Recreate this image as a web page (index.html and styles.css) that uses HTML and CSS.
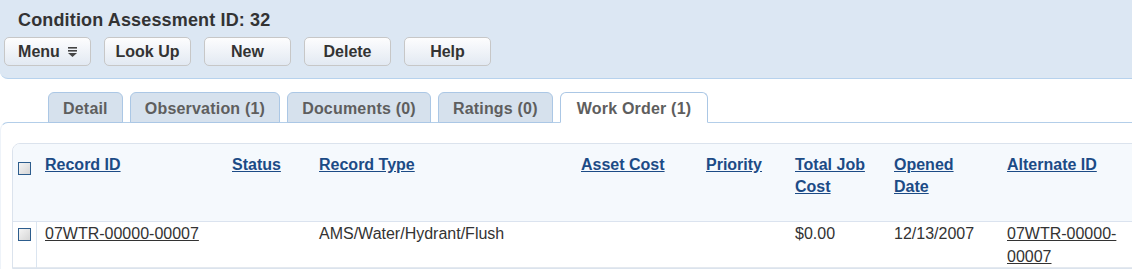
FILE: index.html
```html
<!DOCTYPE html>
<html lang="en">
<head>
  <meta charset="UTF-8" />
  <title>Condition Assessment ID: 32</title>
  <link rel="stylesheet" href="styles.css">
</head>
<body>

  <!-- Record header with actions -->
  <div class="record-header">
    <h1>Condition Assessment ID: 32</h1>
    <div class="actions">
      <button class="btn">Menu
        <svg class="menu-icon" width="9" height="10" viewBox="0 0 9 10">
          <rect x="0" y="0" width="9" height="1.6" fill="#444"/>
          <rect x="0" y="3" width="9" height="1.6" fill="#444"/>
          <polygon points="0,6 9,6 4.5,10" fill="#444"/>
        </svg>
      </button>
      <button class="btn">Look Up</button>
      <button class="btn">New</button>
      <button class="btn">Delete</button>
      <button class="btn">Help</button>
    </div>
  </div>

  <!-- Tabs -->
  <div class="tabs">
    <div class="tab">Detail</div>
    <div class="tab">Observation (1)</div>
    <div class="tab">Documents (0)</div>
    <div class="tab">Ratings (0)</div>
    <div class="tab active">Work Order (1)</div>
  </div>

  <div class="panel">
    <div class="grid">
      <div class="row head">
        <div class="cell check"><span class="checkbox"></span></div>
        <div class="cell"><a href="#">Record ID</a></div>
        <div class="cell"><a href="#">Status</a></div>
        <div class="cell"><a href="#">Record Type</a></div>
        <div class="cell"><a href="#">Asset Cost</a></div>
        <div class="cell"><a href="#">Priority</a></div>
        <div class="cell"><a href="#">Total Job Cost</a></div>
        <div class="cell"><a href="#">Opened Date</a></div>
        <div class="cell"><a href="#">Alternate ID</a></div>
        <div class="cell"></div>
      </div>
      <div class="row data">
        <div class="cell check"><span class="checkbox"></span></div>
        <div class="cell"><a href="#">07WTR-00000-00007</a></div>
        <div class="cell"></div>
        <div class="cell">AMS/Water/Hydrant/Flush</div>
        <div class="cell"></div>
        <div class="cell"></div>
        <div class="cell">$0.00</div>
        <div class="cell">12/13/2007</div>
        <div class="cell"><a href="#">07WTR-00000-00007</a></div>
        <div class="cell"></div>
      </div>
    </div>
  </div>

</body>
</html>
```

FILE: styles.css
```css
html, body {
  margin: 0;
  padding: 0;
  background: #fff;
  color: #333;
  font-family: 'Liberation Sans', Arial, sans-serif;
  overflow: hidden;
}

.record-header {
  background: #dce7f3;
  border-bottom: 1px solid #b7d2ed;
  border-bottom-left-radius: 8px;
  padding: 9px 0 12px 0;
}

.record-header h1 {
  margin: 0 0 0 18px;
  font-size: 18px;
  line-height: 22px;
  font-weight: bold;
  letter-spacing: 0.15px;
  color: #333;
}

.actions {
  display: flex;
  gap: 13px;
  margin-top: 6px;
  padding-left: 4px;
}

.btn {
  width: 87px;
  height: 29px;
  box-sizing: border-box;
  border: 1px solid #c7c7c7;
  border-radius: 5px;
  background: linear-gradient(#fdfdfe, #e2e9f2);
  font-family: 'Liberation Sans', Arial, sans-serif;
  font-size: 16px;
  font-weight: bold;
  color: #333;
  padding: 0;
  display: flex;
  align-items: center;
  justify-content: center;
  gap: 8px;
}

.menu-icon {
  margin-top: 1px;
}

.tabs {
  display: flex;
  gap: 7px;
  margin: 13px 0 -1px 48px;
  position: relative;
  z-index: 1;
}

.tab {
  height: 31px;
  box-sizing: border-box;
  padding: 2px 14px 0;
  line-height: 27px;
  font-size: 16px;
  font-weight: bold;
  letter-spacing: 0.2px;
  color: #5e5e5e;
  background: #d6e1ed;
  border: 1px solid #abc7e5;
  border-radius: 6px 6px 0 0;
}

.tab.ratings {
  padding: 2px 16px 0;
}

.tab.active {
  padding: 2px 16px 0;
  background: #fff;
  border-bottom-color: #fff;
}

.panel {
  border-top: 1px solid #b3cee9;
  border-left: 1px solid #eef3f9;
  border-top-left-radius: 8px;
  padding: 20px 0 0 11px;
}

.grid {
  width: 1240px;
  border: 1px solid #dbe3ed;
  border-top-left-radius: 8px;
  overflow: hidden;
}

.row {
  display: grid;
  grid-template-columns: 24px 187px 87px 262px 125px 89px 99px 113px 131px 120px;
  font-size: 16px;
}

.cell {
  padding: 0 8px;
}

.head {
  background: #f5f9fd;
  height: 78px;
  box-sizing: border-box;
  border-bottom: 1px solid #dbe3ef;
}

.head .cell {
  padding-top: 10px;
  line-height: 22px;
  font-weight: bold;
}

.head a {
  color: #1c4b86;
}

.data {
  height: 46px;
  box-sizing: border-box;
  border-bottom: 1px solid #e4e9ef;
  line-height: 23px;
}

.data a {
  color: #333;
}

.row .cell.check {
  padding: 0 0 0 5px;
}

.data .cell.check {
  border-right: 1px solid #dbe5f0;
}

.checkbox {
  display: block;
  width: 13px;
  height: 13px;
  box-sizing: border-box;
  border: 1px solid #2d5d8d;
  background: linear-gradient(135deg, #f4f4f4, #d6d6d6);
}

.head .checkbox {
  margin-top: 18px;
}

.data .checkbox {
  margin-top: 6px;
}
```
